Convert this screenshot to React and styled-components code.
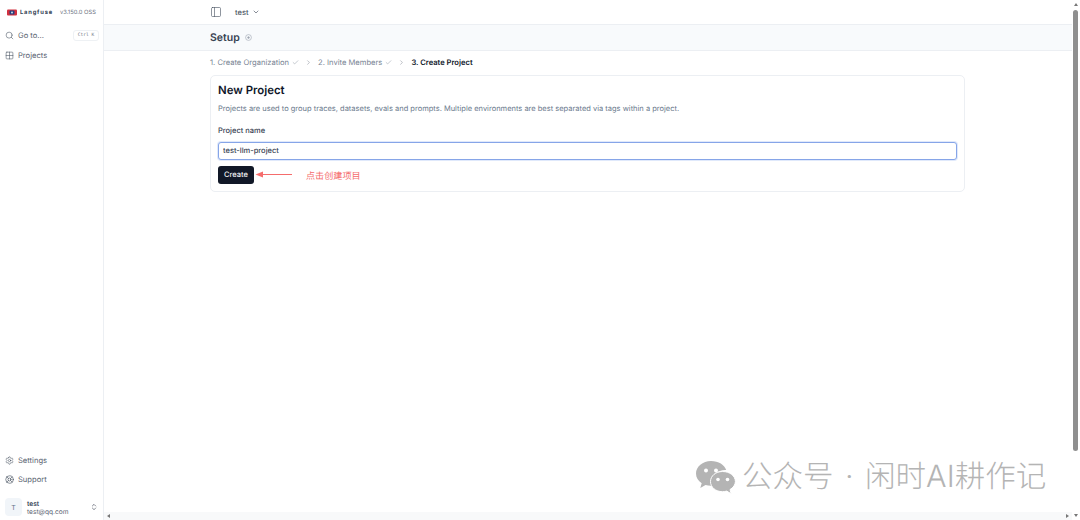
import React from "react";
import styled, { createGlobalStyle } from "styled-components";
import { Search, Grid2x2, Settings, LifeBuoy, ChevronsUpDown, ChevronDown, ChevronRight, PanelLeft, Check } from "lucide-react";

const GlobalStyle = createGlobalStyle`
  html, body {
    margin: 0;
    padding: 0;
    height: 100%;
    overflow: hidden;
    background: #fff;
    font-family: Inter, "Noto Sans CJK SC", sans-serif;
    text-rendering: geometricPrecision;
    color: #0f172a;
  }
  #root { height: 100%; }
`;

const Page = styled.div`
  width: 1080px;
  height: 520px;
  display: flex;
  position: relative;
  overflow: hidden;
`;

const Sidebar = styled.aside`
  width: 103px;
  flex: none;
  border-right: 1px solid #eceff3;
  display: flex;
  flex-direction: column;
`;

const Brand = styled.div`
  box-sizing: border-box;
  height: 26px;
  padding: 0 0 1px 7px;
  display: flex;
  align-items: center;
  font-size: 5.8px;
  color: #6b7280;
  white-space: nowrap;
`;

const BrandName = styled.span`
  font-weight: 700;
  color: #334155;
  letter-spacing: 0.8px;
  margin-left: 3px;
  margin-right: 7px;
`;

const NavItem = styled.div`
  display: flex;
  align-items: center;
  gap: 4px;
  height: 19.5px;
  padding-left: 5px;
  font-size: 7.6px;
  color: #5b6472;
  svg { color: #4b5563; }
`;

const Kbd = styled.span`
  margin-left: auto;
  margin-right: 4px;
  height: 11px;
  width: 26px;
  box-sizing: border-box;
  border: 1px solid #eef1f4;
  border-radius: 3px;
  font-family: "DejaVu Sans Mono", monospace;
  font-size: 4.6px;
  display: flex;
  align-items: center;
  justify-content: center;
  color: #6b7280;
`;

const Spacer = styled.div`
  flex: 1;
`;

const UserRow = styled.div`
  box-sizing: border-box;
  height: 30px;
  display: flex;
  align-items: center;
  padding: 4px 0 0 5px;
  margin-top: 0.5px;
`;

const Avatar = styled.div`
  width: 17px;
  height: 18px;
  border-radius: 4px;
  background: #f1f5f9;
  display: flex;
  align-items: center;
  justify-content: center;
  font-size: 7px;
  color: #64748b;
  margin-right: 5px;
`;

const UserText = styled.div`
  display: flex;
  flex-direction: column;
  flex: 1;
  padding-top: 2px;
  font-size: 6.6px;
  line-height: 8.5px;
  color: #5b6472;
  b {
    font-weight: 600;
    color: #334155;
  }
`;

const Main = styled.main`
  flex: 1;
  min-width: 0;
  display: flex;
  flex-direction: column;
`;

const Topbar = styled.div`
  height: 24px;
  flex: none;
  display: flex;
  align-items: center;
  padding-left: 106px;
  gap: 13px;
  border-bottom: 1px solid #eceff3;
  font-size: 7.5px;
  font-weight: 500;
  color: #4b5563;
  svg { color: #4b5563; }
`;

const Workspace = styled.span`
  display: flex;
  align-items: center;
  gap: 4px;
`;

const TitleBand = styled.div`
  height: 25px;
  flex: none;
  display: flex;
  align-items: center;
  gap: 5px;
  padding-left: 106px;
  background: #f8fafc;
  border-bottom: 1px solid #eceff3;
  font-size: 10.5px;
  font-weight: 600;
  color: #374151;
`;

const InfoMark = styled.svg`
  color: #9ca3af;
`;

const Content = styled.div`
  flex: 1;
  padding: 0 115px 0 106px;
`;

const Steps = styled.ol`
  list-style: none;
  box-sizing: border-box;
  margin: 0;
  padding: 0 0 2px;
  height: 24px;
  display: flex;
  align-items: center;
  font-size: 7.6px;
  white-space: nowrap;
`;

const Step = styled.li`
  display: flex;
  align-items: center;
  gap: 3px;
  font-weight: ${(p) => (p.$active ? 600 : 400)};
  color: ${(p) => (p.$active ? "#0f172a" : "#7a8594")};
`;

const StepArrow = styled.span`
  display: flex;
  margin: 0 6px;
  color: #6b7280;
`;

const Card = styled.section`
  box-sizing: border-box;
  height: 117px;
  border: 1px solid #eceff3;
  border-radius: 5px;
  padding: 7px 7px;
`;

const CardTitle = styled.h2`
  margin: 0;
  font-size: 11.4px;
  line-height: 14px;
  font-weight: 600;
  color: #0f172a;
`;

const CardText = styled.p`
  margin: 6.5px 0 0;
  font-size: 7.5px;
  line-height: 10px;
  color: #6b7a8d;
`;

const Label = styled.label`
  display: block;
  margin-top: 12px;
  font-size: 7.5px;
  line-height: 10px;
  font-weight: 500;
  color: #374151;
`;

const Input = styled.input`
  display: block;
  box-sizing: border-box;
  width: 100%;
  height: 18px;
  margin-top: 6px;
  padding: 0 4px;
  border: 1px solid #86a5e8;
  border-radius: 3px;
  outline: none;
  box-shadow: 0 0 0 1px #e0e9fb;
  font: 500 7.5px Inter, sans-serif;
  text-rendering: geometricPrecision;
  color: #374151;
`;

const Button = styled.button`
  display: block;
  width: 36px;
  height: 18px;
  margin-top: 6px;
  padding: 0;
  border: 0;
  border-radius: 3px;
  background: #111827;
  color: #f3f4f6;
  font: 500 7.5px Inter, sans-serif;
  text-rendering: geometricPrecision;
`;

const Note = styled.span`
  position: absolute;
  left: 306px;
  top: 170px;
  font-size: 9.1px;
  line-height: 13px;
  color: #f56c6c;
`;

const Arrow = styled.svg`
  position: absolute;
  left: 255px;
  top: 170px;
`;

const Watermark = styled.div`
  position: absolute;
  left: 695px;
  top: 459px;
  display: flex;
  align-items: center;
  gap: 6px;
  font-size: 30.5px;
  font-weight: 300;
  line-height: 36px;
  color: #b4b4b4;
  white-space: nowrap;
`;

const Dot = styled.span`
  margin: 0 11.5px;
`;

const HBar = styled.div`
  height: 8px;
  flex: none;
  background: #f8f9fa;
  display: flex;
  align-items: center;
  justify-content: space-between;
  padding: 0 3px;
  margin-right: 8px;
`;

const BarArrow = styled.span`
  width: 0;
  height: 0;
  border-top: 2px solid transparent;
  border-bottom: 2px solid transparent;
  border-${(p) => (p.$dir === "left" ? "right" : "left")}: 3px solid #777;
`;

const VBar = styled.div`
  position: absolute;
  right: 0;
  top: 0;
  bottom: 0;
  width: 8px;
  background: #fff;
  display: flex;
  flex-direction: column;
  align-items: center;
  justify-content: space-between;
  padding: 3px 0;
  box-sizing: border-box;
`;

const VThumb = styled.div`
  position: absolute;
  top: 10px;
  left: 1px;
  width: 5px;
  height: 441px;
  border-radius: 3px;
  background: #8f8f8f;
`;

const VArrow = styled.span`
  width: 0;
  height: 0;
  border-left: 2px solid transparent;
  border-right: 2px solid transparent;
  border-${(p) => (p.$dir === "up" ? "bottom" : "top")}: 3px solid #777;
`;

function LangfuseMark() {
  return (
    <svg width="10" height="7" viewBox="0 0 10 7">
      <rect x="0" y="0.5" width="10" height="6" rx="1" fill="#d2303f" />
      <rect x="2.5" y="1.5" width="5" height="4" rx="1" fill="#24407f" />
      <circle cx="5" cy="3.5" r="0.9" fill="#dfe5ee" />
    </svg>
  );
}

function WechatMark() {
  return (
    <svg width="41" height="35" viewBox="0 0 41 35">
      <path d="M16 1C7.7 1 1 6.7 1 13.6c0 4 2.2 7.4 5.7 9.7L5.3 28l5.2-3c1.7.5 3.5.8 5.5.8l1 0c-.4-1.3-.6-2.5-.6-3.8 0-6.7 6.2-12 13.9-12l.9 0C29.7 4.9 23.5 1 16 1z" fill="#b4b4b4" />
      <circle cx="11" cy="10.5" r="2" fill="#fff" />
      <circle cx="21" cy="10.5" r="2" fill="#fff" />
      <path d="M27.5 11.5C20.6 11.5 15.5 16 15.500 21.6s5.100 10.100 12 10.100c1.500 0 2.900-.2 4.200-.6l4.500 2.700-1.200-4.200c3.300-2 5.400-4.900 5.400-8 0-5.600-5.500-10.100-12.900-10.100z" fill="#b4b4b4" stroke="#fff" strokeWidth="1" />
      <circle cx="23" cy="19.5" r="1.8" fill="#fff" />
      <circle cx="32.5" cy="19.5" r="1.8" fill="#fff" />
    </svg>
  );
}

export default function App() {
  return (
    <Page>
      <GlobalStyle />
      <Sidebar>
        <Brand>
          <LangfuseMark />
          <BrandName>Langfuse</BrandName>
          v3.150.0 OSS
        </Brand>
        <NavItem>
          <Search size={9} strokeWidth={1.5} />
          Go to...
          <Kbd>Ctrl K</Kbd>
        </NavItem>
        <NavItem>
          <Grid2x2 size={9} strokeWidth={1.5} />
          Projects
        </NavItem>
        <Spacer />
        <NavItem>
          <Settings size={9} strokeWidth={1.5} />
          Settings
        </NavItem>
        <NavItem>
          <LifeBuoy size={9} strokeWidth={1.75} />
          Support
        </NavItem>
        <UserRow>
          <Avatar>T</Avatar>
          <UserText>
            <b>test</b>
            test@qq.com
          </UserText>
          <ChevronsUpDown size={8} strokeWidth={1.5} style={{ marginRight: 5 }} />
        </UserRow>
      </Sidebar>
      <Main>
        <Topbar>
          <PanelLeft size={12} strokeWidth={1.25} />
          <Workspace>
            test
            <ChevronDown size={8} strokeWidth={2} />
          </Workspace>
        </Topbar>
        <TitleBand>
          Setup
          <InfoMark width="7" height="7" viewBox="0 0 24 24" fill="none" stroke="currentColor" strokeWidth="2">
            <circle cx="12" cy="12" r="10" />
            <circle cx="12" cy="12" r="3" fill="currentColor" />
          </InfoMark>
        </TitleBand>
        <Content>
          <Steps>
            <Step>
              1. Create Organization
              <Check size={7} strokeWidth={1.5} />
            </Step>
            <StepArrow>
              <ChevronRight size={7} strokeWidth={1.5} />
            </StepArrow>
            <Step>
              2. Invite Members
              <Check size={7} strokeWidth={1.5} />
            </Step>
            <StepArrow>
              <ChevronRight size={7} strokeWidth={1.5} />
            </StepArrow>
            <Step $active>3. Create Project</Step>
          </Steps>
          <Card>
            <CardTitle>New Project</CardTitle>
            <CardText>
              Projects are used to group traces, datasets, evals and prompts. Multiple environments are best separated via tags within a project.
            </CardText>
            <Label>Project name</Label>
            <Input defaultValue="test-llm-project" readOnly />
            <Button>Create</Button>
          </Card>
        </Content>
        <HBar>
          <BarArrow $dir="left" />
          <BarArrow $dir="right" />
        </HBar>
      </Main>
      <VBar>
        <VArrow $dir="up" />
        <VThumb />
        <VArrow $dir="down" />
      </VBar>
      <Arrow width="38" height="9" viewBox="0 0 38 9">
        <path d="M4 4.5H37" stroke="#f56c6c" strokeWidth="1" />
        <path d="M0.5 4.5L8 1.5V7.5Z" fill="#f56c6c" />
      </Arrow>
      <Note>点击创建项目</Note>
      <Watermark>
        <WechatMark />
        <span>
          公众号<Dot>·</Dot>闲时AI耕作记
        </span>
      </Watermark>
    </Page>
  );
}
